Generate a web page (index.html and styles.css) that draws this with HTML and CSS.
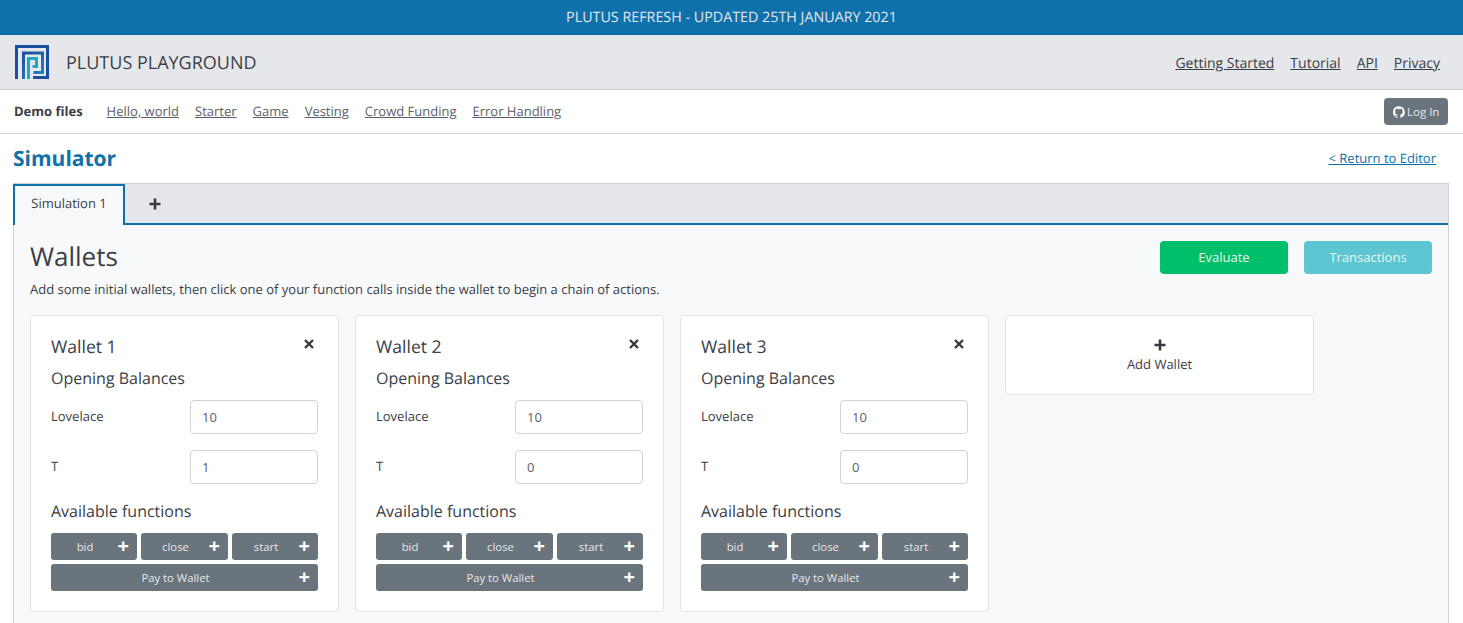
FILE: index.html
```html
<!DOCTYPE html>
<html lang="en">
<head>
    <meta charset="UTF-8">
    <title>Plutus Playground</title>
    <link rel="stylesheet" href="styles.css">
</head>
<body>
    <div class="banner">PLUTUS REFRESH - UPDATED 25TH JANUARY 2021</div>

    <header class="topbar">
        <div class="brand">
            <svg class="logo" viewBox="0 0 34 34" width="34" height="34">
                <defs>
                    <linearGradient id="logoGrad" x1="0" y1="0" x2="0.6" y2="1">
                        <stop offset="0" stop-color="#1a4ea2"/>
                        <stop offset="1" stop-color="#1f7fc0"/>
                    </linearGradient>
                </defs>
                <path d="M1.500 34V1.500H32.500V32.500H18" fill="none" stroke="#1a4ea2" stroke-width="3"/>
                <path d="M8.500 34V8H27.500V27.500H18.500" fill="none" stroke="url(#logoGrad)" stroke-width="3"/>
                <path d="M13.500 34V13.500H21.500V21.500H17.500" fill="none" stroke="#1fa6c9" stroke-width="3"/>
            </svg>
            <span class="brand-name">PLUTUS PLAYGROUND</span>
        </div>
        <nav class="topnav">
            <a href="#">Getting Started</a>
            <a href="#">Tutorial</a>
            <a href="#">API</a>
            <a href="#">Privacy</a>
        </nav>
    </header>

    <div class="demobar">
        <strong class="demo-label">Demo files</strong>
        <a href="#">Hello, world</a>
        <a href="#">Starter</a>
        <a href="#">Game</a>
        <a href="#">Vesting</a>
        <a href="#">Crowd Funding</a>
        <a href="#">Error Handling</a>
        <button class="login" type="button">
            <svg viewBox="0 0 16 16" width="12" height="12"><path fill="#fff" d="M8 .2a8 8 0 0 0-2.500 15.600c.4.1.5-.2.5-.4v-1.400c-2.200.5-2.700-1-2.700-1-.4-.9-.9-1.200-.9-1.200-.7-.5.1-.5.1-.5.8.1 1.200.8 1.200.8.7 1.200 1.900.9 2.300.7.1-.5.3-.9.500-1.100-1.800-.2-3.700-.9-3.700-4 0-.9.300-1.600.800-2.100-.1-.2-.4-1 .1-2.100 0 0 .7-.2 2.200.8a7.600 7.600 0 0 1 4 0c1.500-1 2.200-.8 2.200-.8.4 1.100.2 1.900.1 2.100.5.600.8 1.300.8 2.100 0 3.100-1.900 3.700-3.700 3.900.3.300.6.800.6 1.500v2.200c0 .2.100.5.600.4A8 8 0 0 0 8 .2z"/></svg>
            Log In
        </button>
    </div>

    <main class="simulator">
        <div class="sim-head">
            <h1>Simulator</h1>
            <a href="#" class="back">&lt; Return to Editor</a>
        </div>

        <div class="panel">
            <div class="tabs">
                <div class="tab active">Simulation 1</div>
                <div class="tab-add">
                    <svg viewBox="0 0 12 12" width="12" height="12"><path d="M6 0.500V11.500M0.500 6H11.500" stroke="#343a40" stroke-width="2.600"/></svg>
                </div>
            </div>
            <div class="panel-body">
                <div class="wallets-head">
                    <h2>Wallets</h2>
                    <div class="actions">
                        <button class="btn-evaluate" type="button">Evaluate</button>
                        <button class="btn-transactions" type="button">Transactions</button>
                    </div>
                </div>
                <p class="hint">Add some initial wallets, then click one of your function calls inside the wallet to begin a chain of actions.</p>

                <div class="wallets">
                    <section class="card">
                        <div class="card-title"><h3>Wallet 1</h3><svg class="close" viewBox="0 0 10 10" width="10" height="10"><path d="M1 1L9 9M9 1L1 9" stroke="#343a40" stroke-width="2.400"/></svg></div>
                        <h4>Opening Balances</h4>
                        <div class="balance"><label>Lovelace</label><input type="text" value="10"></div>
                        <div class="balance"><label>T</label><input type="text" value="1"></div>
                        <h4 class="fn-title">Available functions</h4>
                        <div class="functions">
                            <button class="fn" type="button"><span>bid</span><i>+</i></button>
                            <button class="fn" type="button"><span>close</span><i>+</i></button>
                            <button class="fn" type="button"><span>start</span><i>+</i></button>
                            <button class="fn wide" type="button"><span>Pay to Wallet</span><i>+</i></button>
                        </div>
                    </section>
                    <section class="card">
                        <div class="card-title"><h3>Wallet 2</h3><svg class="close" viewBox="0 0 10 10" width="10" height="10"><path d="M1 1L9 9M9 1L1 9" stroke="#343a40" stroke-width="2.400"/></svg></div>
                        <h4>Opening Balances</h4>
                        <div class="balance"><label>Lovelace</label><input type="text" value="10"></div>
                        <div class="balance"><label>T</label><input type="text" value="0"></div>
                        <h4 class="fn-title">Available functions</h4>
                        <div class="functions">
                            <button class="fn" type="button"><span>bid</span><i>+</i></button>
                            <button class="fn" type="button"><span>close</span><i>+</i></button>
                            <button class="fn" type="button"><span>start</span><i>+</i></button>
                            <button class="fn wide" type="button"><span>Pay to Wallet</span><i>+</i></button>
                        </div>
                    </section>
                    <section class="card">
                        <div class="card-title"><h3>Wallet 3</h3><svg class="close" viewBox="0 0 10 10" width="10" height="10"><path d="M1 1L9 9M9 1L1 9" stroke="#343a40" stroke-width="2.400"/></svg></div>
                        <h4>Opening Balances</h4>
                        <div class="balance"><label>Lovelace</label><input type="text" value="10"></div>
                        <div class="balance"><label>T</label><input type="text" value="0"></div>
                        <h4 class="fn-title">Available functions</h4>
                        <div class="functions">
                            <button class="fn" type="button"><span>bid</span><i>+</i></button>
                            <button class="fn" type="button"><span>close</span><i>+</i></button>
                            <button class="fn" type="button"><span>start</span><i>+</i></button>
                            <button class="fn wide" type="button"><span>Pay to Wallet</span><i>+</i></button>
                        </div>
                    </section>
                    <section class="card add-card">
                        <svg viewBox="0 0 12 12" width="12" height="12"><path d="M6 0.500V11.500M0.500 6H11.500" stroke="#343a40" stroke-width="2.600"/></svg>
                        <span class="add-label">Add Wallet</span>
                    </section>
                </div>
            </div>
        </div>
    </main>
</body>
</html>
```
FILE: styles.css
```css
* {
    box-sizing: border-box;
}
html, body {
    height: 623px;
    overflow: hidden;
}
body {
    margin: 0;
    font-family: "Open Sans", sans-serif;
    font-size: 13px;
    color: #3a4046;
    background-color: #fff;
    text-rendering: geometricPrecision;
}
h1, h2, h3, h4, p {
    margin: 0;
    font-weight: 400;
}
.banner {
    height: 35px;
    line-height: 35px;
    text-align: center;
    font-size: 14.300px;
    color: #e6e7ea;
    background-color: #0e71ab;
}
.topbar {
    height: 55px;
    padding: 0 23px 0 15px;
    display: flex;
    align-items: center;
    justify-content: space-between;
    background-color: #e6e7ea;
    border-bottom: 1px solid #d0d0d0;
}
.brand {
    display: flex;
    align-items: center;
}
.logo {
    margin-right: 17px;
}
.brand-name {
    font-size: 18px;
    padding-top: 2px;
}
.topnav {
    display: flex;
    gap: 16px;
    font-size: 14px;
    padding-top: 2px;
}
.topnav a {
    color: #3a4046;
}
.demobar {
    height: 44px;
    padding: 0 15px 0 14px;
    display: flex;
    align-items: center;
    border-bottom: 1px solid #d0d0d0;
}
.demo-label {
    font-weight: 700;
    margin-right: 8px;
    padding-bottom: 2px;
}
.demobar a {
    margin-left: 16px;
    padding-bottom: 2px;
    color: #5c6167;
}
.login {
    margin-left: auto;
    width: 64px;
    height: 27px;
    padding: 0 0 0 9px;
    display: flex;
    align-items: center;
    gap: 2px;
    font: 11.500px "Open Sans", sans-serif;
    color: #e6e7ea;
    background-color: #6a747c;
    border: none;
    border-radius: 4px;
}
.simulator {
    padding: 0 14px 0 13px;
}
.sim-head {
    height: 49px;
    padding-right: 13px;
    display: flex;
    align-items: center;
    justify-content: space-between;
}
.sim-head h1 {
    font-size: 21px;
    font-weight: 700;
    color: #0e71ab;
}
.back {
    font-size: 13px;
    color: #0e71ab;
    margin-bottom: 2px;
}
.panel {
    border: 1px solid #d0d0d0;
    background-color: #f8f9fb;
}
.tabs {
    height: 41px;
    display: flex;
    background-color: #e6e7ea;
    border-bottom: 2px solid #0e71ab;
}
.tab {
    width: 112px;
    height: 41px;
    margin-left: -1px;
    line-height: 35px;
    text-align: center;
    background-color: #f8f9fb;
    border: 2px solid #0e71ab;
    border-bottom: none;
}
.tab-add {
    width: 60px;
    display: flex;
    align-items: center;
    justify-content: center;
}
.panel-body {
    padding: 15px 16px 40px;
}
.wallets-head {
    height: 34px;
    display: flex;
    align-items: center;
    justify-content: space-between;
}
.wallets-head h2 {
    font-size: 26px;
    margin-bottom: 3px;
}
.actions {
    display: flex;
    gap: 16px;
}
.actions button {
    width: 128px;
    height: 33px;
    font: 13px "Open Sans", sans-serif;
    color: #e6f5ee;
    border: none;
    border-radius: 4px;
}
.btn-evaluate {
    background-color: #00bf6b;
}
.btn-transactions {
    background-color: #5ec6d2;
}
.hint {
    margin-top: 6px;
    height: 26px;
}
.wallets {
    margin-top: 9px;
    display: flex;
    align-items: flex-start;
    gap: 16px;
}
.card {
    width: 309px;
    padding: 20px;
    background-color: #fff;
    border: 1px solid #e2e4e8;
    border-radius: 4px;
}
.card-title {
    display: flex;
    justify-content: space-between;
}
.card-title h3 {
    font-size: 17.600px;
    line-height: 23px;
}
.close {
    margin: 3px 4px 0 0;
}
.card h4 {
    margin-top: 8px;
    font-size: 16px;
    line-height: 22px;
}
.card .fn-title {
    margin-top: 11px;
}
.balance {
    height: 50px;
    display: flex;
    justify-content: space-between;
    padding-top: 11px;
}
.balance label {
    line-height: 32px;
}
.balance input {
    width: 128px;
    height: 34px;
    padding: 0 12px 0 11px;
    font: 13px "Open Sans", sans-serif;
    color: #5a6168;
    border: 1px solid #ced4da;
    border-radius: 4px;
}
.functions {
    margin-top: 11px;
    display: grid;
    grid-template-columns: 86px 87px 86px;
    gap: 4px;
}
.fn {
    position: relative;
    height: 27px;
    padding: 0 18px 0 0;
    font: 11.300px "Open Sans", sans-serif;
    color: #e6e7ea;
    background-color: #6a747c;
    border: none;
    border-radius: 3px;
}
.fn i {
    position: absolute;
    right: 8px;
    top: 0;
    font-style: normal;
    font-size: 20px;
    font-weight: 700;
    line-height: 26px;
    color: #fff;
}
.wide {
    grid-column: 1 / 4;
}
.add-card {
    height: 80px;
    padding: 23px 0 0;
    display: flex;
    flex-direction: column;
    align-items: center;
}
.add-label {
    margin-top: 4px;
    line-height: 18px;
}
```
